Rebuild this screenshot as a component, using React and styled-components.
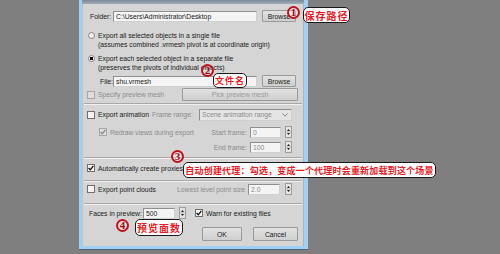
import React from 'react';
import styled, { createGlobalStyle } from 'styled-components';

const GlobalStyle = createGlobalStyle`
  html, body {
    margin: 0;
    padding: 0;
    background: #7f7f7f;
  }
  body {
    width: 500px;
    height: 254px;
    overflow: hidden;
    font-family: "Liberation Sans", Arial, sans-serif;
  }
`;

const Page = styled.div`
  position: relative;
  width: 500px;
  height: 254px;
  padding-left: 79px;
  box-sizing: border-box;
`;

const Dialog = styled.div`
  width: 229px;
  height: 249px;
  box-sizing: border-box;
  background: #d5d5d5;
  border-left: 3px solid #9fd1f6;
  border-right: 4px solid #9fd1f6;
  border-bottom: 3px solid #9fd1f6;
  box-shadow: 0 1px 0 #56616d, inset 1px 0 0 #c2c2c2, inset -1px 0 0 #b4b4b4;
  display: flex;
  flex-direction: column;
`;

const TopStrip = styled.div`
  height: 4px;
  background: linear-gradient(#7c8a99, #a3adb7);
`;

const Content = styled.div`
  padding: 0 7px 0 5px;
  display: flex;
  flex-direction: column;
  font-size: 6.8px;
  color: #1a1a1a;
`;

const Row = styled.div`
  display: flex;
  align-items: center;
  height: ${(p) => p.$h || 12}px;
  margin-top: ${(p) => p.$mt || 0}px;
  padding-left: ${(p) => p.$pl || 0}px;
  white-space: nowrap;
`;

const Label = styled.span`
  flex-shrink: 0;
  color: ${(p) => (p.$dim ? '#8c8c8c' : '#1a1a1a')};
  margin-left: ${(p) => p.$ml || 0}px;
  width: ${(p) => (p.$w !== undefined ? `${p.$w}px` : 'auto')};
  text-align: ${(p) => p.$align || 'left'};
`;

const Input = styled.div`
  flex-shrink: 0;
  box-sizing: border-box;
  height: ${(p) => p.$h || 11}px;
  width: ${(p) => p.$w}px;
  margin-left: ${(p) => p.$ml || 0}px;
  background: #f4f4f4;
  border: 1px solid #8f8f8f;
  border-right-color: #d0d0d0;
  border-bottom-color: #d0d0d0;
  padding-left: 2px;
  font-size: 6.8px;
  line-height: 9px;
  color: ${(p) => (p.$dim ? '#8c8c8c' : '#1a1a1a')};
  overflow: hidden;
`;

const Button = styled.div`
  flex-shrink: 0;
  box-sizing: border-box;
  height: ${(p) => p.$h || 12}px;
  width: ${(p) => p.$w}px;
  margin-left: ${(p) => p.$ml || 0}px;
  background: linear-gradient(#e2e2e2, #cfcfcf);
  border: 1px solid #9a9a9a;
  border-radius: 1px;
  display: flex;
  align-items: center;
  justify-content: center;
  font-size: 6.8px;
  color: ${(p) => (p.$dim ? '#9a9a9a' : '#1a1a1a')};
`;

const Select = styled(Input)`
  display: flex;
  align-items: center;
  justify-content: space-between;
  padding-right: 3px;
  background: #e4e4e4;
`;

const Separator = styled.div`
  height: 0;
  border-top: 1px solid #a8a8a8;
  border-bottom: 1px solid #f0f0f0;
  margin-top: ${(p) => p.$mt || 0}px;
  margin-left: -3px;
  margin-right: -5px;
`;

const RadioGroup = styled.div`
  display: flex;
  flex-direction: column;
  margin-top: ${(p) => p.$mt || 0}px;
  padding-left: 1px;
`;

const RadioLine = styled.div`
  display: flex;
  align-items: center;
  height: 9px;
  white-space: nowrap;
`;

const RadioDot = styled.span`
  box-sizing: border-box;
  width: 7px;
  height: 7px;
  border-radius: 50%;
  border: 1px solid #8a8a8a;
  background: radial-gradient(circle, ${(p) => (p.$on ? '#111 0 1.6px' : '#f2f2f2 0 1px')}, #f2f2f2 1.8px, #dcdcdc);
  margin-right: 3px;
`;

const Indent = styled.span`
  display: inline-block;
  width: 10px;
`;

const BoxWrap = styled.span`
  box-sizing: border-box;
  width: 8px;
  height: 8px;
  border: 1px solid ${(p) => (p.$dim ? '#a6a6a6' : '#707070')};
  background: ${(p) => (p.$dim ? '#dedede' : '#f6f6f6')};
  margin-right: 3px;
  display: flex;
  align-items: center;
  justify-content: center;
  flex-shrink: 0;
`;

const Check = ({ on, dim }) => (
  <BoxWrap $dim={dim}>
    {on && (
      <svg width="6" height="6" viewBox="0 0 6 6">
        <path d="M0.6 3 L2.3 4.8 L5.4 0.8" fill="none" stroke={dim ? '#8a8a8a' : '#111'} strokeWidth="1.3" />
      </svg>
    )}
  </BoxWrap>
);

const SpinWrap = styled.span`
  flex-shrink: 0;
  display: flex;
  width: 5px;
  height: 10px;
  margin-left: ${(p) => p.$ml}px;
  background: #e4e4e4;
  border: 1px solid #9c9c9c;
`;

const Spinner = ({ ml = 4 }) => (
  <SpinWrap $ml={ml}>
    <svg width="5" height="10" viewBox="0 0 5 10">
      <path d="M1 4 L2.5 2 L4 4 Z" fill="#222" />
      <path d="M1 6 L2.5 8 L4 6 Z" fill="#222" />
      <line x1="0" y1="5" x2="5" y2="5" stroke="#9c9c9c" strokeWidth="0.6" />
    </svg>
  </SpinWrap>
);

const Circle = styled.div`
  position: absolute;
  left: ${(p) => p.$x}px;
  top: ${(p) => p.$y}px;
  width: ${(p) => p.$s || 13}px;
  height: ${(p) => p.$s || 13}px;
  box-sizing: border-box;
  border: 2px solid #c0121c;
  border-radius: 50%;
  background: rgba(255, 255, 255, 0.25);
  color: #a80a12;
  font-family: "Liberation Serif", serif;
  font-weight: 700;
  font-size: 11px;
  display: flex;
  align-items: center;
  justify-content: center;
  line-height: 1;
`;

const Callout = styled.div`
  position: absolute;
  left: ${(p) => p.$x}px;
  top: ${(p) => p.$y}px;
  width: ${(p) => p.$w}px;
  height: ${(p) => p.$h}px;
  box-sizing: border-box;
  background: #fff;
  border: 1.5px solid #1a1a1a;
  border-radius: 5px;
  display: flex;
  align-items: center;
  justify-content: center;
  color: #ec1a26;
  font-family: "Noto Sans CJK SC", sans-serif;
  font-weight: 700;
  font-size: ${(p) => p.$fs || 9}px;
  letter-spacing: ${(p) => p.$ls || 0}px;
  white-space: nowrap;
`;

export default function App() {
  return (
    <Page>
      <GlobalStyle />
      <Dialog>
        <TopStrip />
        <Content>
          <Row $mt={6} $h={12}>
            <Label $ml={3} $w={20}>Folder:</Label>
            <Input $w={144} $ml={3}>C:\Users\Administrator\Desktop</Input>
            <Button $w={34} $ml={5}>Browse</Button>
          </Row>

          <RadioGroup $mt={9}>
            <RadioLine>
              <RadioDot />
              Export all selected objects in a single file
            </RadioLine>
            <RadioLine>
              <Indent />
              (assumes combined .vrmesh pivot is at coordinate origin)
            </RadioLine>
          </RadioGroup>

          <RadioGroup $mt={5}>
            <RadioLine>
              <RadioDot $on />
              Export each selected object in a separate file
            </RadioLine>
            <RadioLine>
              <Indent />
              (preserves the pivots of individual objects)
            </RadioLine>
          </RadioGroup>

          <Row $mt={3} $h={12}>
            <Label $ml={13} $w={13}>File:</Label>
            <Input $w={144}>shu.vrmesh</Input>
            <Button $w={34} $ml={5}>Browse</Button>
          </Row>

          <Row $mt={1} $h={13}>
            <Check dim />
            <Label $dim $w={84}>Specify preview mesh</Label>
            <Button $w={116} $h={13} $dim>Pick preview mesh</Button>
          </Row>

          <Separator $mt={2} />

          <Row $mt={3} $h={13}>
            <Check />
            <Label $w={54}>Export animation</Label>
            <Label $dim $w={47}>Frame range:</Label>
            <Select $w={93} $h={12} $dim>
              <span>Scene animation range</span>
              <svg width="6" height="4" viewBox="0 0 6 4">
                <path d="M0.5 0.5 L3 3.2 L5.5 0.5" fill="none" stroke="#8a8a8a" strokeWidth="1" />
              </svg>
            </Select>
          </Row>

          <Row $mt={5} $h={12} $pl={12}>
            <Check on dim />
            <Label $dim $w={98}>Redraw views during export</Label>
            <Label $dim $w={39} $align="right">Start frame:</Label>
            <Input $w={31} $ml={3} $dim>0</Input>
            <Spinner />
          </Row>

          <Row $mt={3} $h={12} $pl={12}>
            <Label $w={109} />
            <Label $dim $w={39} $align="right">End frame:</Label>
            <Input $w={31} $ml={3} $dim>100</Input>
            <Spinner />
          </Row>

          <Separator $mt={4} />

          <Row $mt={3} $h={12}>
            <Check on />
            <Label>Automatically create proxies</Label>
          </Row>

          <Separator $mt={6} />

          <Row $mt={1} $h={12}>
            <Check />
            <Label $w={79}>Export point clouds</Label>
            <Label $dim $w={68}>Lowest level point size</Label>
            <Input $w={32} $ml={3} $dim>2.0</Input>
            <Spinner ml={5} />
          </Row>

          <Separator $mt={8} />

          <Row $mt={2} $h={12}>
            <Label $ml={2} $w={54}>Faces in preview:</Label>
            <Input $w={32}>500</Input>
            <Spinner ml={4} />
            <Label $w={9} />
            <Check on />
            <Label>Warn for existing files</Label>
          </Row>

          <Row $mt={8} $h={14}>
            <Label $w={115} />
            <Button $w={40} $h={14}>OK</Button>
            <Button $w={45} $h={14} $ml={11}>Cancel</Button>
          </Row>
        </Content>
      </Dialog>

      <Circle $x={287} $y={6}>1</Circle>
      <Callout $x={303} $y={7} $w={47} $h={16} $fs={10} $ls={1}>保存路径</Callout>

      <Circle $x={201} $y={64}>2</Circle>
      <Callout $x={213} $y={73} $w={34} $h={15} $fs={9} $ls={1}>文件名</Callout>

      <Circle $x={171} $y={150}>3</Circle>
      <Callout $x={183} $y={162} $w={253} $h={16} $fs={9} $ls={0.2}>
        自动创建代理：勾选，变成一个代理时会重新加载到这个场景
      </Callout>

      <Circle $x={116} $y={219}>4</Circle>
      <Callout $x={135} $y={219} $w={48} $h={17} $fs={10} $ls={1}>预览面数</Callout>
    </Page>
  );
}
